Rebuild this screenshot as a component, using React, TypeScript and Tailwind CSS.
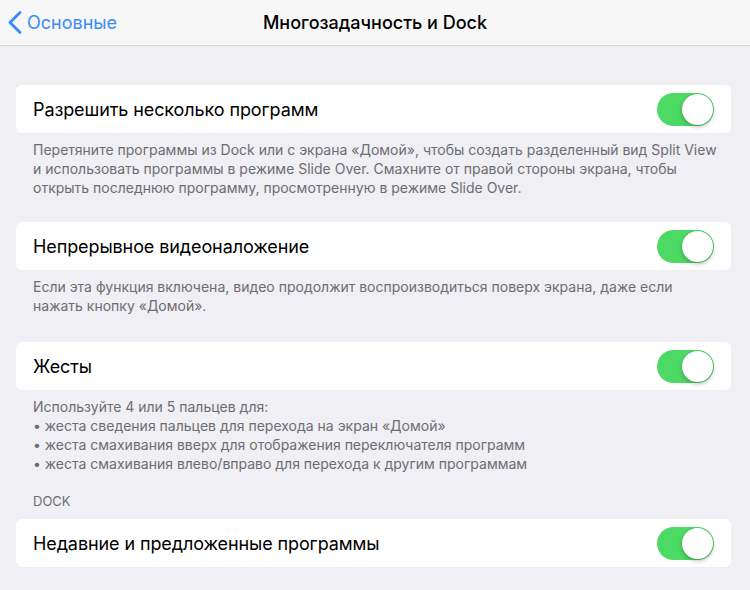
type Row = { title: string; footer?: string[] };

const ROWS: Row[] = [
  {
    title: "Разрешить несколько программ",
    footer: [
      "Перетяните программы из Dock или с экрана «Домой», чтобы создать разделенный вид Split View",
      "и использовать программы в режиме Slide Over. Смахните от правой стороны экрана, чтобы",
      "открыть последнюю программу, просмотренную в режиме Slide Over.",
    ],
  },
  {
    title: "Непрерывное видеоналожение",
    footer: [
      "Если эта функция включена, видео продолжит воспроизводиться поверх экрана, даже если",
      "нажать кнопку «Домой».",
    ],
  },
  {
    title: "Жесты",
    footer: [
      "Используйте 4 или 5 пальцев для:",
      "• жеста сведения пальцев для перехода на экран «Домой»",
      "• жеста смахивания вверх для отображения переключателя программ",
      "• жеста смахивания влево/вправо для перехода к другим программам",
    ],
  },
];

function Toggle() {
  return (
    <div className="flex h-[33px] w-[57px] items-center justify-end rounded-full bg-[#4cd964] p-[1px]">
      <div className="h-[31px] w-[31px] rounded-full bg-white shadow-[0_2px_4px_rgba(0,0,0,0.25),0_0_0_0.5px_rgba(0,0,0,0.08)]" />
    </div>
  );
}

function Card({ title }: { title: string }) {
  return (
    <div className="ml-4 mr-[19px] flex h-12 items-center justify-between rounded-md bg-white pl-[17px] pr-[17px]">
      <span className="text-[18px] tracking-[-0.1px] text-black">{title}</span>
      <Toggle />
    </div>
  );
}

function Footer({ lines }: { lines: string[] }) {
  return (
    <div className="px-[33px] pt-[7px] text-[14px] leading-[19px] text-[#6d6d72]">
      {lines.map((l) => (
        <div key={l} className="whitespace-nowrap">{l}</div>
      ))}
    </div>
  );
}

export default function App() {
  return (
    <div className="h-[590px] w-[750px] overflow-hidden bg-[#efeff4] font-['Inter',sans-serif]">
      <div className="relative flex h-[46px] items-center justify-center border-b border-[#d6d6da] bg-[#f7f7f8]">
        <div className="absolute left-[8px] top-0 flex h-full items-center text-[#3a8bf7]">
          <svg width="14" height="23" viewBox="0 0 14 23" fill="none">
            <path d="M12 1.5 2 11.5l10 10" stroke="currentColor" strokeWidth="2.8" strokeLinecap="round" strokeLinejoin="round" />
          </svg>
          <span className="ml-[5px] text-[18px]">Основные</span>
        </div>
        <span className="text-[18px] font-medium text-black">Многозадачность и Dock</span>
      </div>

      <div className="pt-[39px]">
        <Card title={ROWS[0].title} />
        <Footer lines={ROWS[0].footer!} />
        <div className="h-[25px]" />
        <Card title={ROWS[1].title} />
        <Footer lines={ROWS[1].footer!} />
        <div className="h-[27px]" />
        <Card title={ROWS[2].title} />
        <Footer lines={ROWS[2].footer!} />
        <div className="px-[33px] pt-[19px] pb-[8px] text-[13px] leading-[19px] text-[#6d6d72]">DOCK</div>
        <Card title="Недавние и предложенные программы" />
      </div>
    </div>
  );
}
